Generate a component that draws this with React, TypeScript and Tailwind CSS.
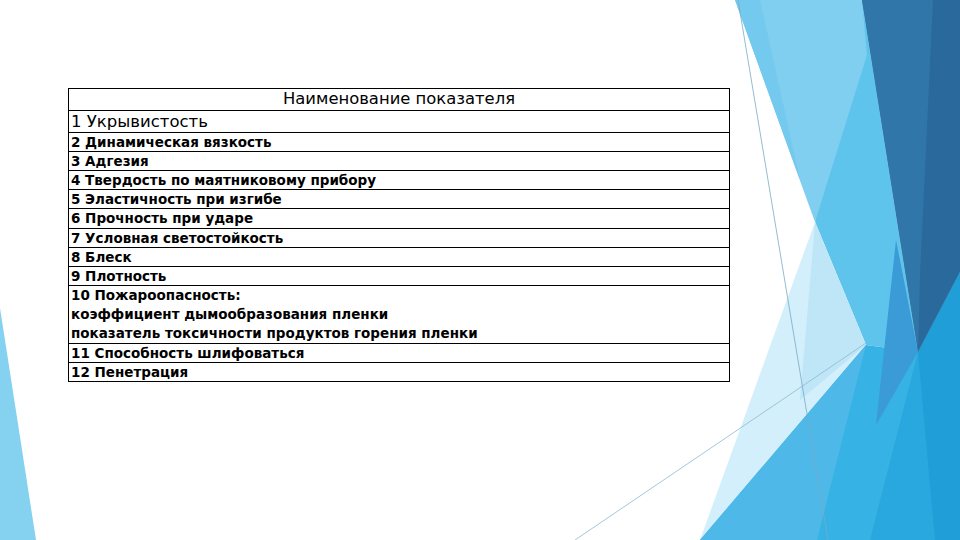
import React from 'react';

const rows: { lines: string[]; h: string; big?: boolean }[] = [
  { lines: ['1 Укрывистость'], h: 'h-[22px]', big: true },
  { lines: ['2 Динамическая вязкость'], h: 'h-[19px]' },
  { lines: ['3 Адгезия'], h: 'h-[19px]' },
  { lines: ['4 Твердость по маятниковому прибору'], h: 'h-[19px]' },
  { lines: ['5 Эластичность при изгибе'], h: 'h-[19px]' },
  { lines: ['6 Прочность при ударе'], h: 'h-[20px]' },
  { lines: ['7 Условная светостойкость'], h: 'h-[19px]' },
  { lines: ['8 Блеск'], h: 'h-[19px]' },
  { lines: ['9 Плотность'], h: 'h-[19px]' },
  {
    lines: [
      '10 Пожароопасность:',
      'коэффициент дымообразования пленки',
      'показатель токсичности продуктов горения пленки',
    ],
    h: 'h-[58px]',
  },
  { lines: ['11 Способность шлифоваться'], h: 'h-[19px]' },
  { lines: ['12 Пенетрация'], h: 'h-[19px]' },
];

const Backdrop: React.FC = () => (
  <svg className="absolute inset-0" width="960" height="540" viewBox="0 0 960 540">
    {/* left corner shard */}
    <polygon points="0,308 36,540 0,540" fill="#84d2f0" />

    {/* right facets, back to front */}
    <polygon points="862,0 918,352 866,345 815,222" fill="#5fc4eb" />
    <polygon points="735,0 862,0 867,55 815,222" fill="#80cef0" />
    <polygon points="735,0 760,0 800,180 815,222" fill="#74c9ee" />
    <polygon points="815,222 866,345 700,540" fill="#d3effb" />
    <polygon points="815,222 866,345 800,400" fill="#bfe6f7" />
    <polygon points="700,540 866,345 918,352 960,272 960,540" fill="#36b2e4" />
    <polygon points="700,540 866,345 817,540" fill="#4eb9e8" />
    <polygon points="918,352 960,272 960,540 870,540" fill="#28a8df" />
    <polygon points="918,352 960,272 960,540 935,540" fill="#1f9ed7" />
    <polygon points="896,240 918,352 876,425" fill="#3a9bd6" />
    <polygon points="862,0 960,0 960,272 918,352" fill="#2a699c" />
    <polygon points="862,0 933,0 920,275 918,352" fill="#3176a8" />

    {/* thin accent lines */}
    <line x1="738" y1="0" x2="828" y2="540" stroke="#7aa9c4" strokeWidth="0.8" />
    <line x1="575" y1="540" x2="866" y2="343" stroke="#8fb9cf" strokeWidth="0.8" />
  </svg>
);

export default function App() {
  return (
    <div className="relative w-[960px] h-[540px] overflow-hidden bg-white">
      <Backdrop />
      <div className="relative pt-[88px] pl-[68px] font-['DejaVu_Sans',sans-serif] text-black">
        <div className="w-[662px] border-t border-x border-black bg-white">
          <div className="h-[22px] border-b border-black flex items-center justify-center text-[16.4px] leading-none">
            Наименование показателя
          </div>
          {rows.map((r, i) => (
            <div
              key={i}
              className={`${r.h} border-b border-black pl-[2px] flex flex-col justify-center`}
            >
              {r.lines.map((l, j) => (
                <div
                  key={j}
                  className={
                    r.big
                      ? 'text-[16.5px] leading-[21px] whitespace-nowrap'
                      : 'text-[13.5px] leading-[19px] font-bold whitespace-nowrap'
                  }
                >
                  {l}
                </div>
              ))}
            </div>
          ))}
        </div>
      </div>
    </div>
  );
}
